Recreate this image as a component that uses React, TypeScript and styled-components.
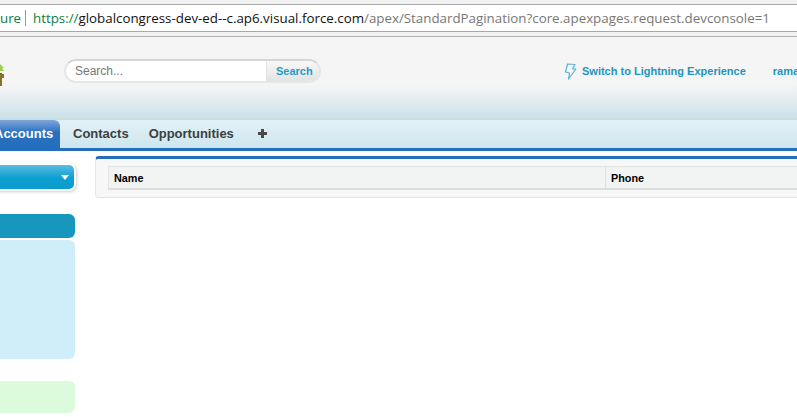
import React from 'react';
import styled, { createGlobalStyle } from 'styled-components';

const GlobalStyle = createGlobalStyle`
  html, body {
    margin: 0;
    padding: 0;
    background: #fff;
  }
  body {
    font-family: "Liberation Sans", Arial, sans-serif;
    overflow: hidden;
  }
`;

const Page = styled.div`
  width: 797px;
  height: 417px;
  overflow: hidden;
  display: flex;
  flex-direction: column;
`;

const BrowserBar = styled.div`
  height: 37px;
  box-sizing: border-box;
  padding-top: 4px;
  background: #f1f1f1;
  border-bottom: 1px solid #b4b4b4;
`;

const AddressBar = styled.div`
  height: 28px;
  box-sizing: border-box;
  display: flex;
  align-items: center;
  background: #fff;
  border-top: 1px solid #a9a9a9;
  border-bottom: 1px solid #a9a9a9;
  font-family: "Open Sans", sans-serif;
  font-size: 13.34px;
  white-space: nowrap;
`;

const Secure = styled.span`
  flex-shrink: 0;
  width: 25px;
  color: #0b8043;
`;

const Divider = styled.span`
  flex-shrink: 0;
  width: 1px;
  height: 16px;
  margin-right: 7px;
  background: #9a9a9a;
`;

const Scheme = styled.span`
  color: #0b8043;
`;

const Host = styled.span`
  color: #111;
`;

const PathText = styled.span`
  color: #777;
`;

const Header = styled.div`
  height: 82px;
  flex-shrink: 0;
  box-sizing: border-box;
  padding-top: 22px;
  display: flex;
  align-items: flex-start;
  background: linear-gradient(to bottom, #f5f5f5 0, #f5f5f5 48px, #cbe1e9 82px);
`;

const Logo = styled.svg`
  width: 5px;
  height: 28px;
  flex-shrink: 0;
  margin-top: 2px;
  margin-right: 59px;
`;

const SearchBox = styled.div`
  width: 257px;
  height: 24px;
  display: flex;
  box-sizing: border-box;
  border: 2px solid #e6e6e6;
  border-top-color: #d6d6d6;
  border-radius: 12px;
  overflow: hidden;
  margin-right: 243px;
  flex-shrink: 0;
`;

const SearchInput = styled.div`
  flex: 1;
  padding-left: 9px;
  background: #fff;
  color: #777;
  font-size: 12px;
  line-height: 20px;
`;

const SearchButton = styled.div`
  width: 53px;
  box-sizing: border-box;
  padding-left: 9px;
  border-left: 1px solid #e2e2e2;
  background: linear-gradient(to bottom, #f8f8f8, #e2e4e4);
  color: #1f9bc4;
  font-size: 11px;
  font-weight: bold;
  line-height: 20px;
`;

const HeaderLink = styled.a`
  display: flex;
  align-items: center;
  gap: 5px;
  height: 24px;
  color: #1f94bd;
  font-size: 11px;
  font-weight: bold;
  white-space: nowrap;
  margin-right: 27px;
`;

const TabBar = styled.div`
  height: 32px;
  flex-shrink: 0;
  box-sizing: border-box;
  display: flex;
  align-items: flex-end;
  border-top: 1px solid #c6dde5;
  border-bottom: 3px solid #236fbd;
  background: linear-gradient(to bottom, #e3f1f6, #cde6ee);
  font-size: 13px;
  font-weight: bold;
  color: #3c4043;
`;

const ActiveTab = styled.div`
  height: 28px;
  width: 72px;
  flex-shrink: 0;
  box-sizing: border-box;
  margin-left: -12px;
  padding-left: 6px;
  margin-right: 13px;
  border-radius: 0 6px 0 0;
  background: linear-gradient(to bottom, #7fa6d8, #2a70bf 45%, #236fbd);
  color: #fff;
  line-height: 27px;
  white-space: nowrap;
  overflow: hidden;
`;

const Tab = styled.div<{ $gap: number }>`
  height: 28px;
  line-height: 27px;
  margin-right: ${p => p.$gap}px;
  white-space: nowrap;
`;

const PlusIcon = styled.svg`
  width: 9px;
  height: 9px;
  align-self: center;
  margin-top: -1px;
  margin-left: -1px;
`;

const Body = styled.div`
  flex: 1;
  display: flex;
  align-items: flex-start;
  gap: 20px;
`;

const Sidebar = styled.div`
  width: 75px;
  flex-shrink: 0;
  padding-top: 14px;
  display: flex;
  flex-direction: column;
`;

const Picker = styled.div`
  height: 24px;
  box-sizing: border-box;
  margin-bottom: 25px;
  display: flex;
  align-items: center;
  justify-content: flex-end;
  padding-right: 5px;
  border-radius: 0 5px 5px 0;
  background: linear-gradient(to bottom, #5cbde2, #0a9fd0 55%, #0a9ccc);
  box-shadow: 0 0 0 2px #fff, 1px 1px 3px 2px #cfcfcf;
  margin-right: 1px;
`;

const Caret = styled.span`
  width: 0;
  height: 0;
  border-left: 4px solid transparent;
  border-right: 4px solid transparent;
  border-top: 5px solid #fff;
`;

const SideBlock = styled.div<{ $color: string; $height: number; $gap: number }>`
  height: ${p => p.$height}px;
  margin-bottom: ${p => p.$gap}px;
  background: ${p => p.$color};
  border-radius: 0 6px 6px 0;
  flex-shrink: 0;
`;

const Main = styled.div`
  flex: 1;
  min-width: 0;
  margin-top: 5px;
  height: 42px;
  box-sizing: border-box;
  padding: 7px 0 0 12px;
  border-top: 3px solid #236fbd;
  border-left: 1px solid #e6e6e6;
  border-bottom: 1px solid #e4e4e4;
  border-radius: 4px 0 0 4px;
  background: #f8f7f7;
`;

const HeaderRow = styled.div`
  height: 24px;
  box-sizing: border-box;
  display: grid;
  grid-template-columns: 496px 1fr;
  border: 1px solid #e3e5e5;
  border-bottom: 2px solid #dcdede;
  border-right: none;
  background: #f2f3f3;
  font-size: 10.8px;
  font-weight: bold;
  color: #000;
`;

const HeaderCell = styled.div`
  padding-left: 5px;
  line-height: 22px;

  & + & {
    border-left: 1px solid #dedede;
  }
`;

export default function App() {
  return (
    <Page>
      <GlobalStyle />
      <BrowserBar>
        <AddressBar>
          <Secure>ure</Secure>
          <Divider />
          <Scheme>https://</Scheme>
          <Host>globalcongress-dev-ed--c.ap6.visual.force.com</Host>
          <PathText>/apex/StandardPagination?core.apexpages.request.devconsole=1</PathText>
        </AddressBar>
      </BrowserBar>
      <Header>
        <Logo viewBox="0 0 5 28">
          <path d="M0 3 L4 7 L2 7 L4 10 L0 10Z" fill="#9ccf52" />
          <rect x="0" y="12" width="2" height="1" fill="#a33" />
          <rect x="0" y="13" width="4" height="4" fill="#8a7028" />
          <rect x="0" y="17" width="2" height="8" fill="#8a7028" />
        </Logo>
        <SearchBox>
          <SearchInput>Search...</SearchInput>
          <SearchButton>Search</SearchButton>
        </SearchBox>
        <HeaderLink>
          <svg width="13" height="17" viewBox="0 0 13 17" fill="none" stroke="#5ab2d2" strokeWidth="1.2">
            <path d="M3.5 1 L11 1.5 L8.5 6 H12 L4.5 16 L5.5 10 L1.5 9 Z" strokeLinejoin="round" />
          </svg>
          Switch to Lightning Experience
        </HeaderLink>
        <HeaderLink>rama</HeaderLink>
      </Header>
      <TabBar>
        <ActiveTab>Accounts</ActiveTab>
        <Tab $gap={20}>Contacts</Tab>
        <Tab $gap={25}>Opportunities</Tab>
        <PlusIcon viewBox="0 0 9 9">
          <path d="M3 0 H6 V3 H9 V6 H6 V9 H3 V6 H0 V3 H3 Z" fill="#4a4a4a" />
        </PlusIcon>
      </TabBar>
      <Body>
        <Sidebar>
          <Picker>
            <Caret />
          </Picker>
          <SideBlock $color="#1797be" $height={24} $gap={2} />
          <SideBlock $color="#d0eef9" $height={119} $gap={22} />
          <SideBlock $color="#dcfadc" $height={32} $gap={0} />
        </Sidebar>
        <Main>
          <HeaderRow>
            <HeaderCell>Name</HeaderCell>
            <HeaderCell>Phone</HeaderCell>
          </HeaderRow>
        </Main>
      </Body>
    </Page>
  );
}
